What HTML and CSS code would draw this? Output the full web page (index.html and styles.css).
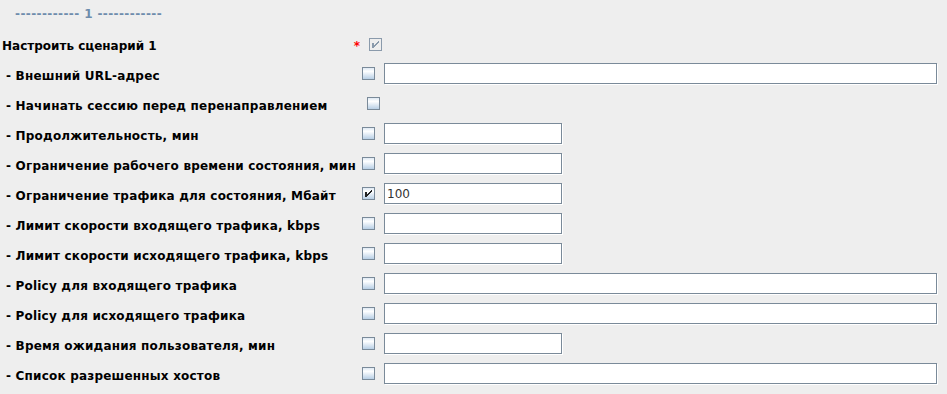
FILE: index.html
```html
<!DOCTYPE html>
<html lang="ru">
<head>
  <meta charset="UTF-8">
  <title>Сценарий 1</title>
  <link rel="stylesheet" href="styles.css">
</head>
<body>
  <div id="scenario">
    <div class="section-title">------------ 1 ------------</div>

    <div class="row row-head">
      <div class="label">Настроить сценарий 1 <span class="req">*</span></div>
      <span class="check check-disabled checked">
        <svg width="13" height="13" viewBox="0 0 13 13"><path d="M3 5h2v5H3z M9 3H10V5H9V6H8V7H7V8H6V9H5V7H6V6H7V5H8V4H9Z"/></svg>
      </span>
    </div>

    <div class="row">
      <div class="label sub">- Внешний URL-адрес</div>
      <span class="check"></span>
      <input class="field wide" type="text">
    </div>

    <div class="row">
      <div class="label sub">- Начинать сессию перед перенаправлением</div>
      <span class="check shifted"></span>
    </div>

    <div class="row">
      <div class="label sub">- Продолжительность, мин</div>
      <span class="check"></span>
      <input class="field short" type="text">
    </div>

    <div class="row">
      <div class="label sub">- Ограничение рабочего времени состояния, мин</div>
      <span class="check"></span>
      <input class="field short" type="text">
    </div>

    <div class="row">
      <div class="label sub">- Ограничение трафика для состояния, Мбайт</div>
      <span class="check checked">
        <svg width="13" height="13" viewBox="0 0 13 13"><path d="M3 5h2v5H3z M9 3H10V5H9V6H8V7H7V8H6V9H5V7H6V6H7V5H8V4H9Z"/></svg>
      </span>
      <input class="field short" type="text" value="100">
    </div>

    <div class="row">
      <div class="label sub">- Лимит скорости входящего трафика, kbps</div>
      <span class="check"></span>
      <input class="field short" type="text">
    </div>

    <div class="row">
      <div class="label sub">- Лимит скорости исходящего трафика, kbps</div>
      <span class="check"></span>
      <input class="field short" type="text">
    </div>

    <div class="row">
      <div class="label sub">- Policy для входящего трафика</div>
      <span class="check"></span>
      <input class="field wide" type="text">
    </div>

    <div class="row">
      <div class="label sub">- Policy для исходящего трафика</div>
      <span class="check"></span>
      <input class="field wide" type="text">
    </div>

    <div class="row">
      <div class="label sub">- Время ожидания пользователя, мин</div>
      <span class="check"></span>
      <input class="field short" type="text">
    </div>

    <div class="row">
      <div class="label sub">- Список разрешенных хостов</div>
      <span class="check"></span>
      <input class="field wide" type="text">
    </div>
  </div>
</body>
</html>
```

FILE: styles.css
```css
body {
  margin: 0;
  background-color: #eeeeee;
  color: #000;
  font-family: 'DejaVu Sans', sans-serif;
  font-size: 12px;
  font-weight: bold;
}

#scenario {
  width: 947px;
}

.section-title {
  height: 30px;
  line-height: 28px;
  padding-left: 15px;
  color: #6e8cac;
  letter-spacing: 0.4px;
  white-space: pre;
}

.row {
  display: grid;
  grid-template-columns: 362px 22px 1fr;
  align-items: start;
  height: 30px;
}

.row-head {
  height: 29px;
}

.label {
  display: flex;
  justify-content: space-between;
  padding: 10px 0 0 2px;
  line-height: 14px;
  white-space: nowrap;
}

.label.sub {
  padding-left: 6px;
  letter-spacing: 0.2px;
}

.row-head .label {
  padding-top: 9px;
}

.req {
  color: #ff0000;
  padding-right: 2px;
}

/* checkbox, 13x13 like the swing one */
.check {
  box-sizing: border-box;
  width: 13px;
  height: 13px;
  margin-top: 8px;
  border: 1px solid #7a8a99;
  background: linear-gradient(#dde8f3 0%, #ffffff 30%, #b8cfe5 100%);
  position: relative;
}

.check svg {
  position: absolute;
  left: -1px;
  top: -1px;
  shape-rendering: crispEdges;
  fill: #222;
}

.check-disabled {
  margin-left: 7px;
  border-color: #8a9aab;
  background: #eeeeee;
}

.check-disabled svg {
  fill: #8a9aab;
}

.check.shifted {
  margin-left: 5px;
}

.field {
  box-sizing: border-box;
  height: 21px;
  margin: 4px 0 0 0;
  padding: 0 2px;
  border: 1px solid #7a8a99;
  background-color: #fff;
  box-shadow: 1px 1px 0 #fff;
  font-family: 'DejaVu Sans', sans-serif;
  font-size: 12px;
  font-weight: normal;
  color: #333;
  outline: none;
}

.field.wide {
  width: 553px;
}

.field.short {
  width: 178px;
}
```
